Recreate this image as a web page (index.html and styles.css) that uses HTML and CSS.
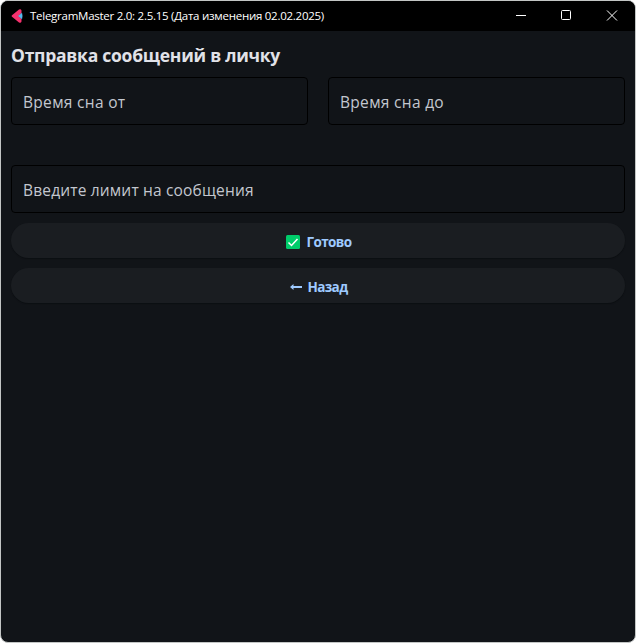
FILE: index.html
```
<!DOCTYPE html>
<html lang="ru">
<head>
<meta charset="utf-8">
<title>TelegramMaster</title>
<link rel="stylesheet" href="styles.css">
</head>
<body>
<div class="window">
  <header class="titlebar">
    <svg class="logo" width="14" height="16" viewBox="0 0 14 16"><path d="M8 1.500Q10 .5 10.500 2.500V5L7.500 8l3 3v2.500Q10 15.500 8 14.500L1 8.800Q0 8 1 7.200Z" fill="#f5316d"/><path d="M7 8 11 4.800Q12 8 11 11.200Z" fill="#58b9ee"/></svg>
    <span class="caption">TelegramMaster 2.0: 2.5.15 (Дата изменения 02.02.2025)</span>
    <div class="controls">
      <svg width="46" height="30" viewBox="0 0 46 30"><path d="M18 14.500h10" stroke="#fff"/></svg>
      <svg width="46" height="30" viewBox="0 0 46 30"><rect x="17.500" y="9.500" width="9" height="9" rx="1" fill="none" stroke="#fff"/></svg>
      <svg width="46" height="30" viewBox="0 0 46 30"><path d="M17 9.500l10 10M27 9.500l-10 10" stroke="#fff" fill="none"/></svg>
    </div>
  </header>
  <main class="content">
    <h1 class="heading">Отправка сообщений в личку</h1>
    <div class="row">
      <div class="field">Время сна от</div>
      <div class="field">Время сна до</div>
    </div>
    <div class="field limit">Введите лимит на сообщения</div>
    <div class="button">
      <svg width="14" height="14" viewBox="0 0 14 14"><rect width="14" height="14" rx="1.500" fill="#00cc6a"/><path d="M2.500 7.500l3 3 6-6.500" fill="none" stroke="#fff" stroke-width="1.500"/></svg>
      <span>Готово</span>
    </div>
    <div class="button">
      <svg class="arrow" width="12" height="8" viewBox="0 0 12 8"><path d="M0 4l3.500-3v2H12v2H3.500v2Z" fill="#9ecaff"/></svg>
      <span>Назад</span>
    </div>
  </main>
</div>
</body>
</html>
```
FILE: styles.css
```
* { box-sizing: border-box; }
body {
  margin: 0;
  background: #fff;
  font-family: "Open Sans", "Noto Sans", sans-serif;
}
.window {
  width: 636px;
  height: 643px;
  border: 1px solid #c3c6c5;
  border-radius: 8px;
  background: #111418;
  overflow: hidden;
}
.titlebar {
  display: flex;
  align-items: center;
  height: 30px;
  padding-left: 10px;
  background: #000;
  color: #fff;
}
.logo { margin-right: 5px; margin-top: -1px; }
.caption {
  margin-top: -1px;
  font-size: 11.5px;
  letter-spacing: -0.26px;
  white-space: nowrap;
}
.controls {
  display: flex;
  margin-left: auto;
  margin-right: -1px;
}
.content {
  display: flex;
  flex-direction: column;
  gap: 10px;
  padding: 10px;
}
.heading {
  margin: 0;
  height: 26px;
  line-height: 28px;
  font-size: 17.5px;
  font-weight: 700;
  letter-spacing: -0.26px;
  color: #e1e2e8;
  white-space: nowrap;
}
.row { display: flex; gap: 20px; }
.field {
  flex: 1;
  height: 48px;
  padding-left: 11px;
  border: 1px solid #000;
  border-radius: 4px;
  color: #c3c7cf;
  font-size: 15.5px;
  line-height: 49px;
  letter-spacing: 0.31px;
  white-space: nowrap;
}
.limit {
  flex: none;
  margin-top: 30px;
  letter-spacing: 0.17px;
}
.button {
  display: flex;
  align-items: center;
  justify-content: center;
  gap: 6px;
  height: 35px;
  padding: 2px 0 0 2px;
  border-radius: 18px;
  background: #1a1d21;
  box-shadow: 0 1px 1px #0c0f12;
  color: #9ecaff;
  font-size: 13.5px;
  font-weight: 700;
  letter-spacing: -0.6px;
}
.arrow { margin-right: -1px; }
```
